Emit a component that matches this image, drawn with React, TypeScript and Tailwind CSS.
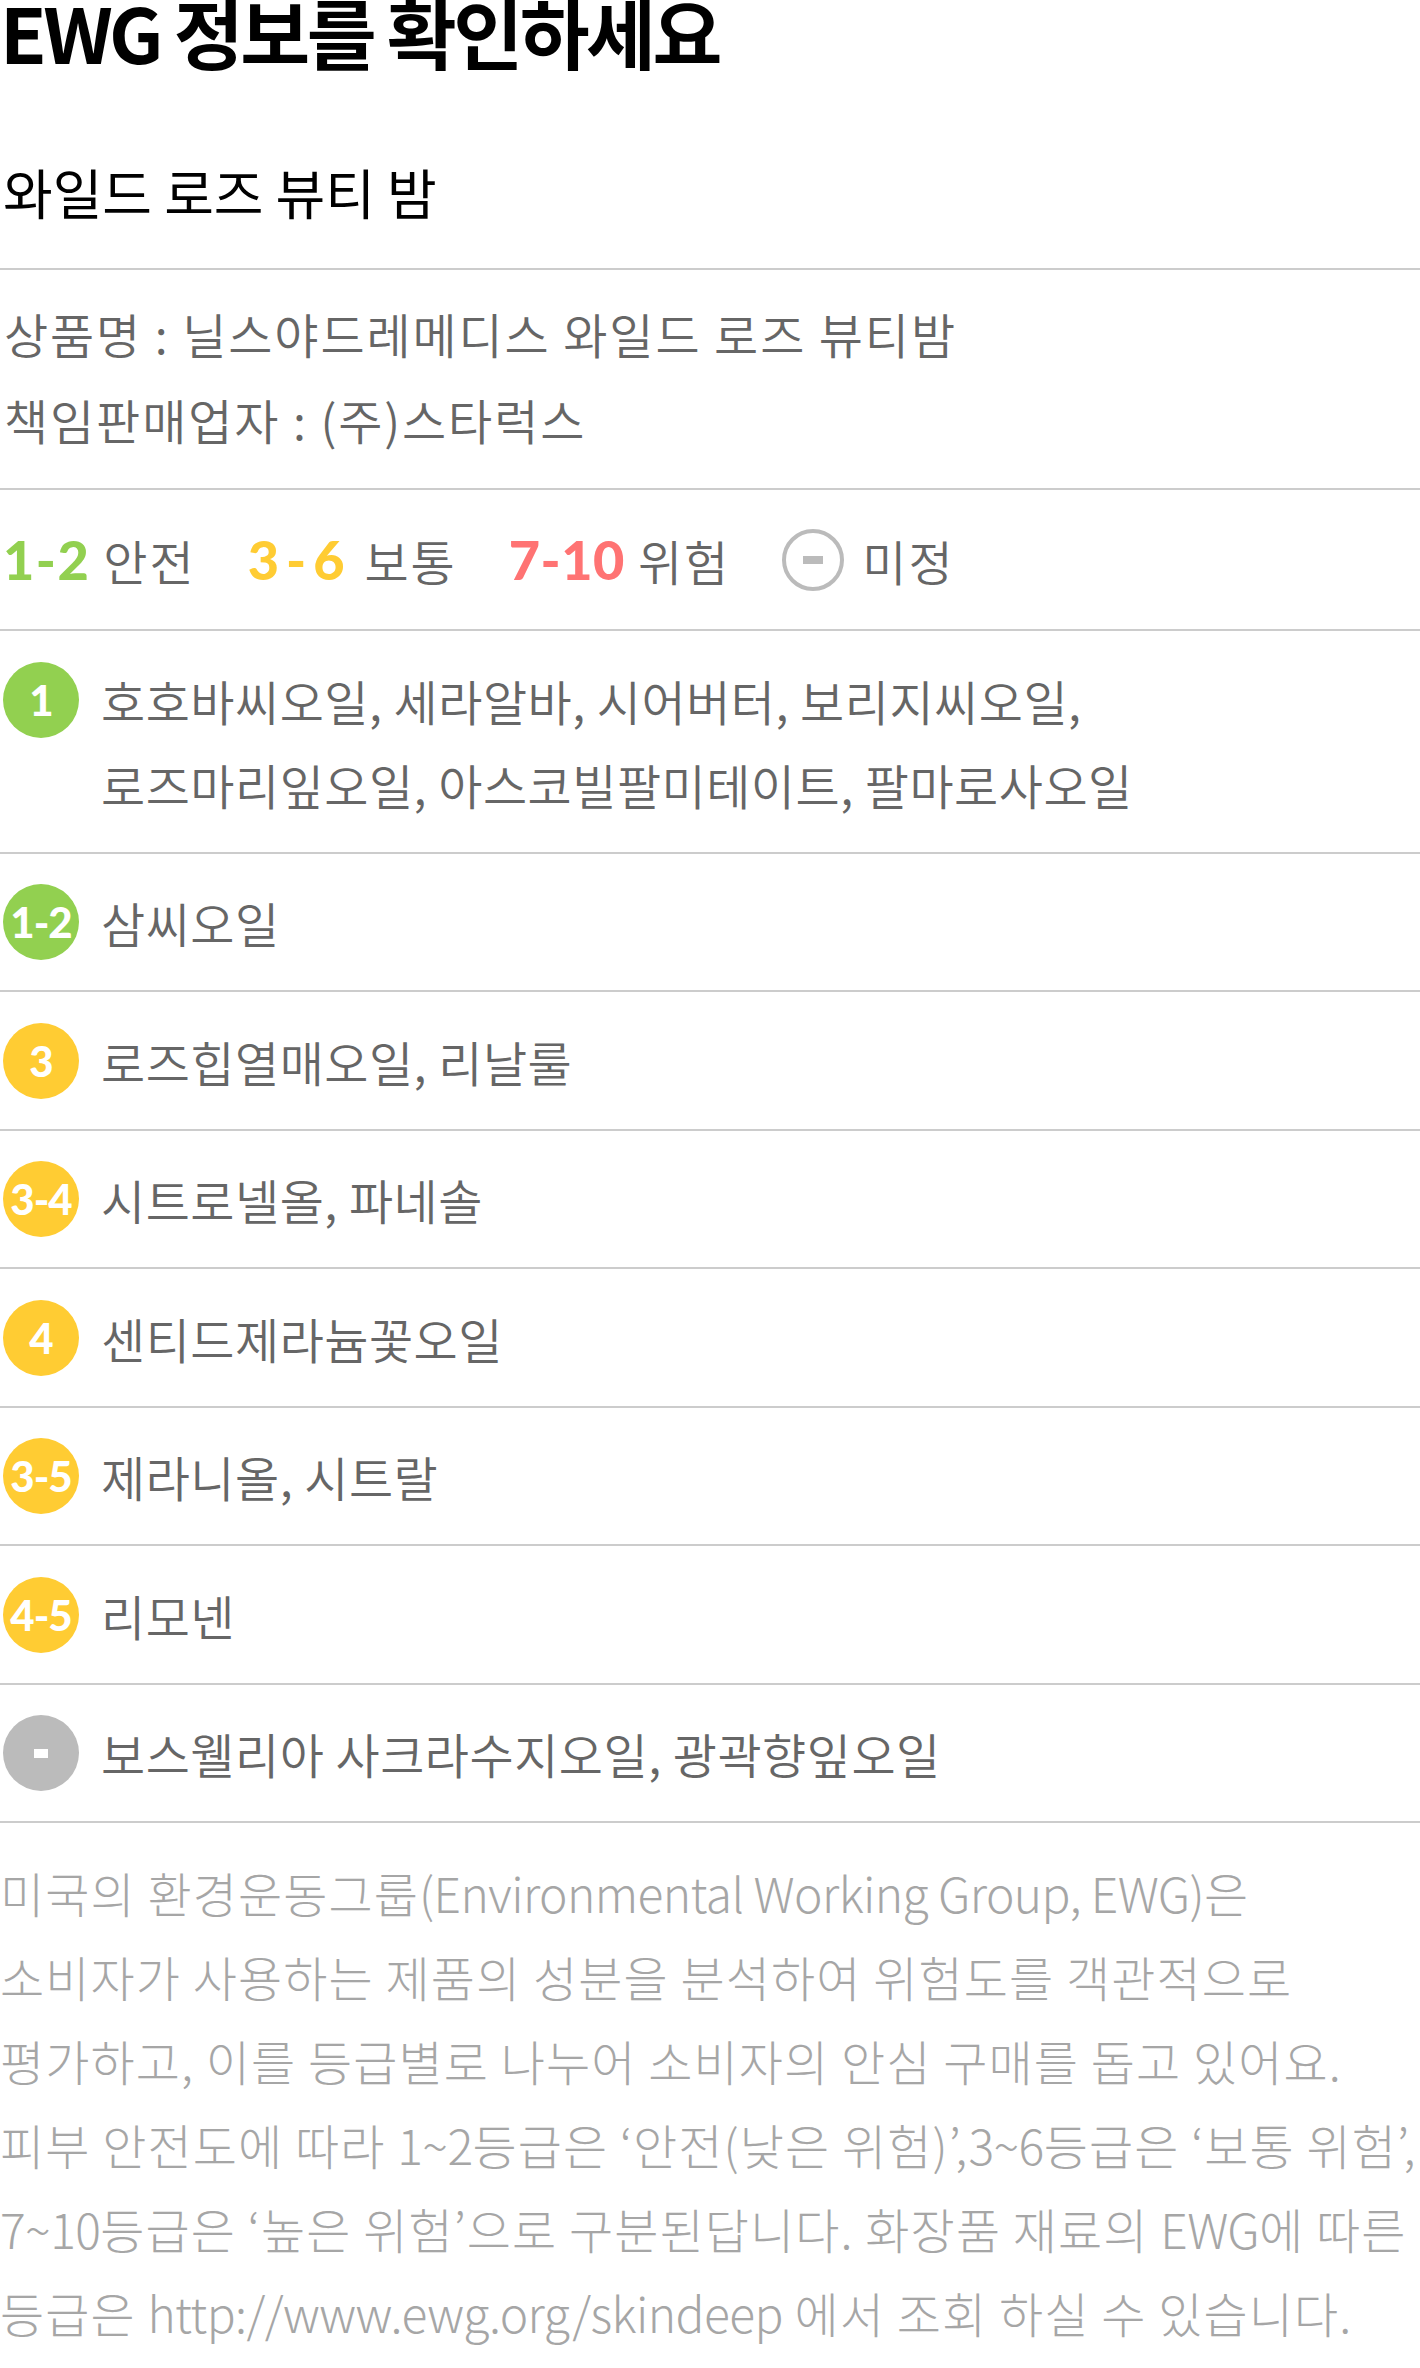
import React from "react";

type Grade = { badge: string; color: string; lines: string[] };

const GREEN = "bg-[#92d050]";
const YELLOW = "bg-[#ffcc33]";
const GRAY = "bg-[#bbbbbb]";

const grades: Grade[] = [
  {
    badge: "1",
    color: GREEN,
    lines: ["호호바씨오일, 세라알바, 시어버터, 보리지씨오일,", "로즈마리잎오일, 아스코빌팔미테이트, 팔마로사오일"],
  },
  { badge: "1-2", color: GREEN, lines: ["삼씨오일"] },
  { badge: "3", color: YELLOW, lines: ["로즈힙열매오일, 리날룰"] },
  { badge: "3-4", color: YELLOW, lines: ["시트로넬올, 파네솔"] },
  { badge: "4", color: YELLOW, lines: ["센티드제라늄꽃오일"] },
  { badge: "3-5", color: YELLOW, lines: ["제라니올, 시트랄"] },
  { badge: "4-5", color: YELLOW, lines: ["리모넨"] },
  { badge: "-", color: GRAY, lines: ["보스웰리아 사크라수지오일, 광곽향잎오일"] },
];

function Badge({ badge, color }: { badge: string; color: string }) {
  return (
    <div className={`w-[76px] h-[76px] shrink-0 rounded-full ${color} flex items-center justify-center`}>
      {badge === "-" ? (
        <span className="block w-[14px] h-[9px] bg-white" />
      ) : (
        <span className="font-['Lato',sans-serif] font-black text-white text-[42px] leading-none tracking-[-1px]">
          {badge}
        </span>
      )}
    </div>
  );
}

function LegendItem({ range, label, color }: { range: string; label: string; color: string }) {
  return (
    <div className="flex items-center gap-[13px]">
      <span className={`font-['Lato',sans-serif] font-black text-[54px] leading-none ${color}`}>{range}</span>
      <span className="tracking-[2px]">{label}</span>
    </div>
  );
}

const Latin = ({ children }: { children: React.ReactNode }) => (
  <span className="tracking-[-0.6px]">{children}</span>
);

export default function App() {
  return (
    <div className="w-[1420px] min-h-[2368px] bg-white text-[#666] font-['Noto_Sans_CJK_KR','Noto_Sans',sans-serif]">
      <h1 className="text-[76px] leading-[62px] font-bold tracking-[-3.5px] text-black">EWG 정보를 확인하세요</h1>

      <div className="pt-[103px] pb-[49px] border-b-2 border-[#cccccc]">
        <h2 className="text-[54px] leading-[54px] tracking-[0px] text-black pl-[3px]">와일드 로즈 뷰티 밤</h2>
      </div>

      {/* product info */}
      <div className="pt-[20px] pb-[26px] border-b-2 border-[#cccccc] text-[48px] leading-[86px] tracking-[1.9px] font-[350] pl-[4px]">
        <p>상품명 : 닐스야드레메디스 와일드 로즈 뷰티밤</p>
        <p>책임판매업자 : (주)스타럭스</p>
      </div>

      {/* legend */}
      <div className="h-[141px] border-b-2 border-[#cccccc] flex items-center gap-[52px] text-[48px] font-[350] pl-[3px]">
        <LegendItem range="1-2" label="안전" color="text-[#92d050] tracking-[1.5px]" />
        <LegendItem range="3-6" label="보통" color="text-[#ffcc33] tracking-[7px]" />
        <LegendItem range="7-10" label="위험" color="text-[#ff7373] tracking-[0.5px]" />
        <div className="flex items-center gap-[18px]">
          <div className="w-[62px] h-[62px] rounded-full border-[4px] border-[#bbbbbb] flex items-center justify-center">
            <span className="block w-[20px] h-[8px] bg-[#bbbbbb]" />
          </div>
          <span className="tracking-[2px]">미정</span>
        </div>
      </div>

      {/* grade rows */}
      {grades.map((g) => (
        <div key={g.badge} className="flex gap-[22px] pt-[26.5px] pb-[26px] border-b-2 border-[#cccccc] pl-[3px]">
          <div className="h-[84px] flex items-center">
            <Badge badge={g.badge} color={g.color} />
          </div>
          <div className="text-[48px] leading-[84px] tracking-[0.5px] font-[350]">
            {g.lines.map((l) => (
              <p key={l}>{l}</p>
            ))}
          </div>
        </div>
      ))}

      {/* note */}
      <div className="pt-[27px] text-[48px] leading-[84px] tracking-[1.1px] text-[#a6a6a6] font-light whitespace-nowrap">
        <p>
          미국의 환경운동그룹<Latin>(Environmental Working Group, EWG)</Latin>은
        </p>
        <p>소비자가 사용하는 제품의 성분을 분석하여 위험도를 객관적으로</p>
        <p>평가하고, 이를 등급별로 나누어 소비자의 안심 구매를 돕고 있어요.</p>
        <p>
          피부 안전도에 따라 <Latin>1~2</Latin>등급은 ‘안전(낮은 위험)’,<Latin>3~6</Latin>등급은 ‘보통 위험’,
        </p>
        <p>
          <Latin>7~10</Latin>등급은 ‘높은 위험’으로 구분된답니다. 화장품 재료의 <Latin>EWG</Latin>에 따른
        </p>
        <p>
          등급은 <Latin>http://www.ewg.org/skindeep</Latin> 에서 조회 하실 수 있습니다.
        </p>
      </div>
    </div>
  );
}
